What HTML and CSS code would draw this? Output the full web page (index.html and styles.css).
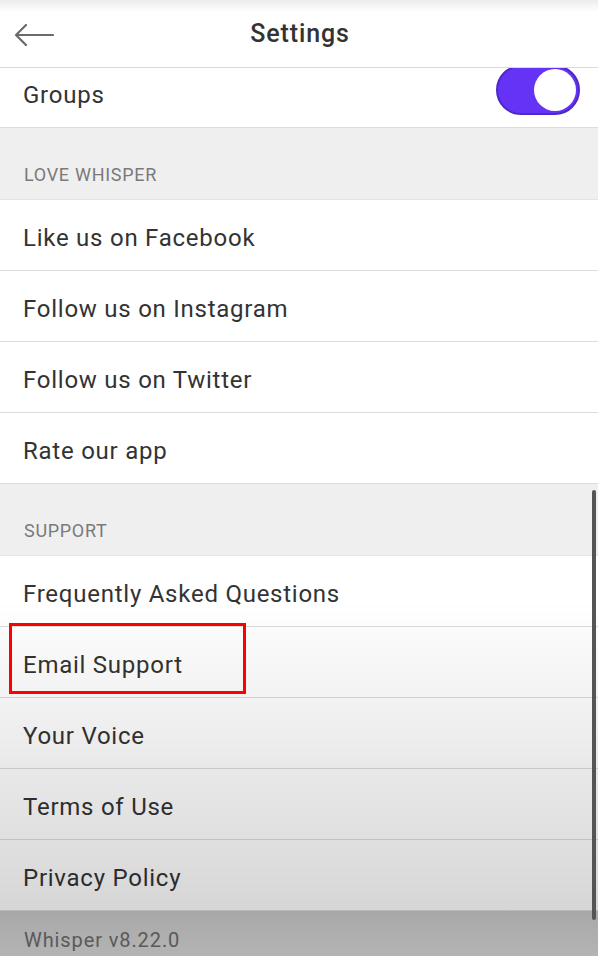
FILE: index.html
```html
<!DOCTYPE html>
<html lang="en">
<head>
    <meta charset="UTF-8">
    <meta name="viewport" content="width=device-width, initial-scale=1.0">
    <title>Settings</title>
    <link rel="stylesheet" href="styles.css">
</head>
<body>
    <div class="screen">
        <header class="topbar">
            <svg class="back" width="40" height="24" viewBox="0 0 40 24">
                <path d="M39 12H2M12 2L2 12l10 10" fill="none" stroke="#6a6a6a" stroke-width="2.2" stroke-linecap="round" stroke-linejoin="round"/>
            </svg>
            <h1>Settings</h1>
        </header>

        <div class="row row-groups">
            <span>Groups</span>
            <div class="toggle"><div class="knob"></div></div>
        </div>

        <div class="section">LOVE WHISPER</div>
        <div class="row">Like us on Facebook</div>
        <div class="row">Follow us on Instagram</div>
        <div class="row">Follow us on Twitter</div>
        <div class="row">Rate our app</div>

        <div class="section">SUPPORT</div>
        <div class="row">Frequently Asked Questions</div>
        <div class="row highlighted">Email Support</div>
        <div class="row">Your Voice</div>
        <div class="row">Terms of Use</div>
        <div class="row">Privacy Policy</div>

        <div class="footer">Whisper v8.22.0</div>

        <div class="fade"></div>
        <div class="scrollbar"></div>
    </div>
</body>
</html>
```

FILE: styles.css
```css
body {
    margin: 0;
    padding: 0;
    font-family: "Roboto", "Liberation Sans", sans-serif;
    background-color: #fff;
    color: #333;
}

.screen {
    position: relative;
    width: 598px;
    height: 956px;
    overflow: hidden;
    background-color: #fff;
}

.topbar {
    height: 68px;
    display: flex;
    align-items: center;
    justify-content: center;
    position: relative;
    background: linear-gradient(#ececec, #fff 12px);
    border-bottom: 1px solid #dadada;
    box-sizing: border-box;
    z-index: 2;
}

.topbar h1 {
    margin: 0;
    font-size: 25px;
    font-weight: 500;
    color: #333;
    letter-spacing: 0.9px;
    position: relative;
    left: 1px;
}

.back {
    position: absolute;
    left: 14px;
    top: 23px;
}

.row {
    height: 71px;
    display: flex;
    align-items: center;
    padding-left: 23px;
    font-size: 24px;
    color: #333;
    border-bottom: 1px solid #dcdcdc;
    box-sizing: border-box;
    letter-spacing: 0.75px;
    padding-top: 6px;
    position: relative;
}

.row-groups {
    height: 60px;
    justify-content: space-between;
    padding-right: 18px;
    padding-top: 0;
    padding-bottom: 6px;
}

.toggle {
    width: 84px;
    height: 50px;
    border-radius: 25px;
    background-color: #6433f5;
    position: relative;
    top: -5px;
    box-sizing: border-box;
    border: 2px solid #4f28c8;
}

.knob {
    position: absolute;
    right: 2px;
    top: 2px;
    width: 42px;
    height: 42px;
    border-radius: 50%;
    background-color: #fff;
}

.section {
    height: 72px;
    background-color: #efefef;
    display: flex;
    align-items: flex-end;
    padding-left: 24px;
    padding-bottom: 14px;
    box-sizing: border-box;
    font-size: 18px;
    color: #7a7a7a;
    letter-spacing: 0.7px;
    border-bottom: 1px solid #e4e4e4;
}

.highlighted::after {
    content: "";
    position: absolute;
    left: 9px;
    top: -4px;
    width: 237px;
    height: 71px;
    border: 3px solid #f00;
    box-sizing: border-box;
    z-index: 3;
}

.footer {
    height: 46px;
    background-color: #c8c8c8;
    padding-left: 24px;
    display: flex;
    align-items: center;
    padding-top: 12px;
    box-sizing: border-box;
    font-size: 20px;
    letter-spacing: 0.9px;
    color: #666;
}

.fade {
    position: absolute;
    left: 0;
    right: 0;
    top: 600px;
    bottom: 0;
    background: linear-gradient(rgba(0, 0, 0, 0), rgba(0, 0, 0, 0.16) 310px, rgba(0, 0, 0, 0.1));
    pointer-events: none;
    z-index: 1;
}

.scrollbar {
    position: absolute;
    right: 2px;
    top: 490px;
    width: 4px;
    height: 430px;
    border-radius: 2px;
    background-color: #555;
    z-index: 2;
}
```
